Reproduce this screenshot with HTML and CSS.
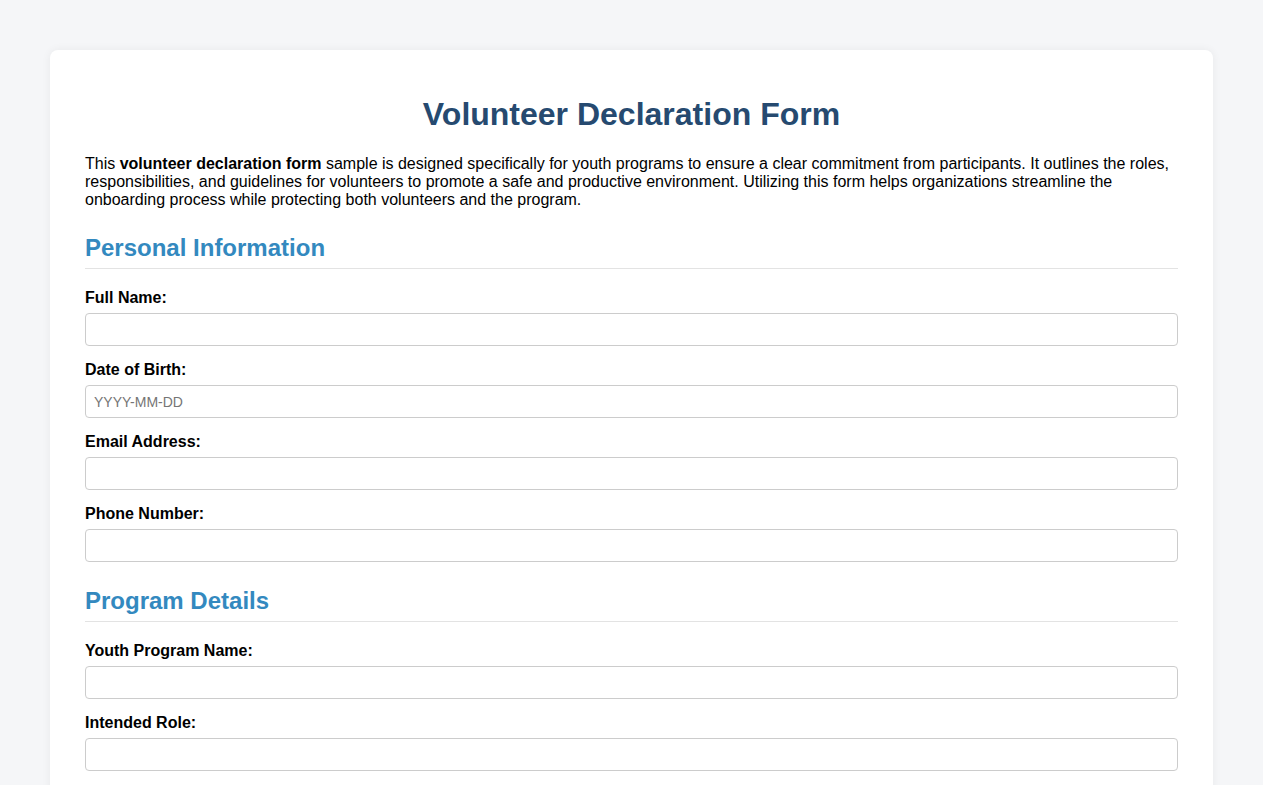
FILE: index.html
```html
<!DOCTYPE html>
<html lang="en">
<head>
<meta charset="utf-8">
<title>Volunteer Declaration Form</title>
<link rel="stylesheet" href="styles.css">
</head>
<body>
<div class="container">
  <h1 class="title">Volunteer Declaration Form</h1>
  <p class="intro">This <strong>volunteer declaration form</strong> sample is designed specifically for youth programs to ensure a clear commitment from participants. It outlines the roles, responsibilities, and guidelines for volunteers to promote a safe and productive environment. Utilizing this form helps organizations streamline the onboarding process while protecting both volunteers and the program.</p>

  <h2 class="section-title">Personal Information</h2>
  <div class="field">
    <label class="label" for="fullname">Full Name:</label>
    <input class="input" id="fullname" type="text">
  </div>
  <div class="field">
    <label class="label" for="dob">Date of Birth:</label>
    <input class="input" id="dob" type="text" placeholder="YYYY-MM-DD">
  </div>
  <div class="field">
    <label class="label" for="email">Email Address:</label>
    <input class="input" id="email" type="email">
  </div>
  <div class="field">
    <label class="label" for="phone">Phone Number:</label>
    <input class="input" id="phone" type="tel">
  </div>

  <h2 class="section-title">Program Details</h2>
  <div class="field">
    <label class="label" for="program">Youth Program Name:</label>
    <input class="input" id="program" type="text">
  </div>
  <div class="field">
    <label class="label" for="role">Intended Role:</label>
    <input class="input" id="role" type="text">
  </div>
  <div class="field">
    <label class="label" for="avail">Availability:</label>
    <input class="input" id="avail" type="text">
  </div>
</div>
</body>
</html>
```

FILE: styles.css
```css
html, body {
  margin: 0;
  padding: 0;
}
body {
  background: #f5f6f8;
  font-family: "Liberation Sans", Arial, sans-serif;
  color: #000;
  padding: 50px;
}
.container {
  background: #fff;
  border-radius: 8px;
  box-shadow: 0 0 10px rgba(0, 0, 0, 0.06);
  padding: 35px 35px 40px;
}
.title {
  margin: 11px 0 22px;
  font-size: 32px;
  line-height: 37px;
  font-weight: bold;
  text-align: center;
  color: #264a70;
}
.intro {
  margin: 0 0 16px;
  font-size: 16px;
  line-height: 18px;
}
.section-title {
  margin: 25px 0 20px;
  padding-bottom: 6px;
  font-size: 24px;
  line-height: 28px;
  font-weight: bold;
  color: #3389bf;
  border-bottom: 1px solid #e3e3e3;
}
.field {
  margin-bottom: 15px;
}
.label {
  display: block;
  margin-bottom: 6px;
  font-size: 16px;
  line-height: 18px;
  font-weight: bold;
}
.input {
  display: block;
  box-sizing: border-box;
  width: 100%;
  height: 33px;
  margin: 0;
  padding: 8px;
  font-family: "Liberation Sans", Arial, sans-serif;
  font-size: 14px;
  border: 1px solid #ccc;
  border-radius: 4px;
  background: #fff;
}
.input::placeholder {
  color: #757575;
}
```
